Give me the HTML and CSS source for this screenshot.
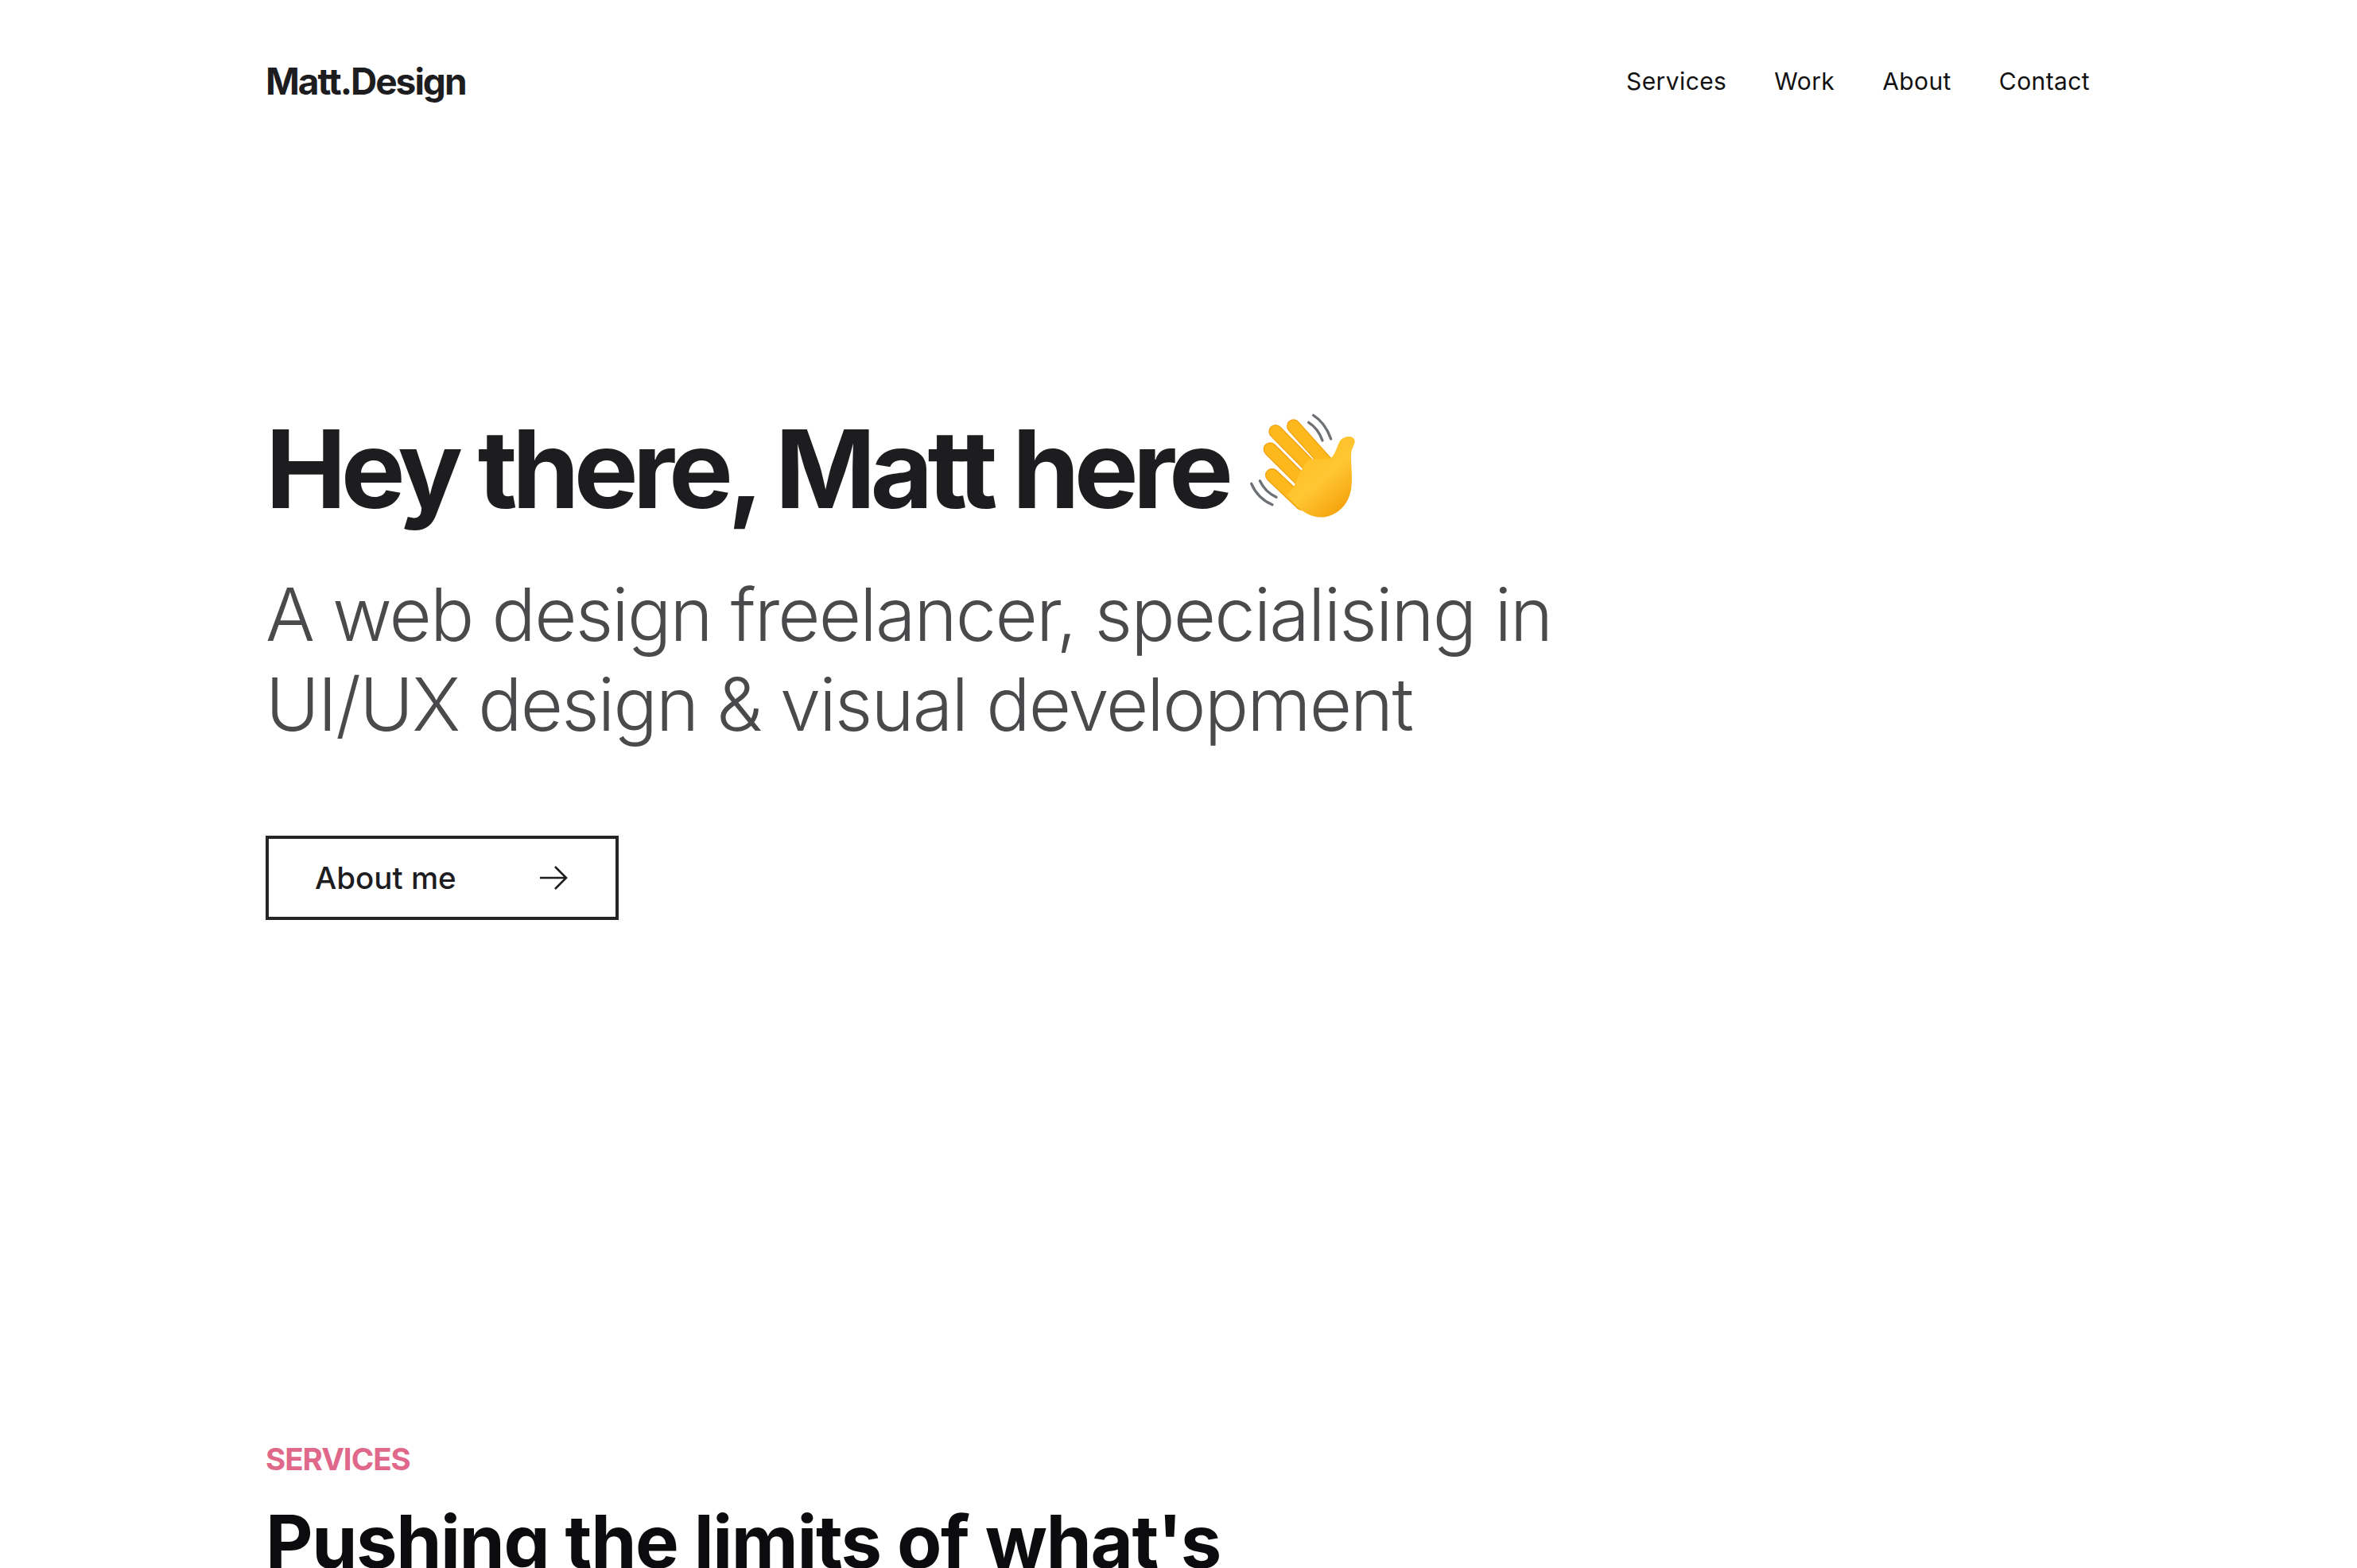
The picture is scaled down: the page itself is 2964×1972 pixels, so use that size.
FILE: index.html
```html
<!DOCTYPE html>
<html lang="en">
<head>
    <meta charset="UTF-8">
    <title>Matt.Design</title>
    <link rel="stylesheet" href="styles.css">
</head>
<body>
    <div class="wrapper">
        <header class="top">
            <a href="#" class="logo">Matt.Design</a>
            <nav class="menu">
                <a href="#">Services</a>
                <a href="#">Work</a>
                <a href="#">About</a>
                <a href="#">Contact</a>
            </nav>
        </header>
        <section class="hero">
            <h1 class="hero-title">
                <span>Hey there, Matt here</span>
                <svg class="wave" viewBox="0 0 600 510" aria-hidden="true">
                    <defs>
                        <linearGradient id="skin" x1="0" y1="0" x2="0.7" y2="1">
                            <stop offset="0" stop-color="#fdb91c"/>
                            <stop offset="0.6" stop-color="#ffc733"/>
                            <stop offset="1" stop-color="#f5a20c"/>
                        </linearGradient>
                    </defs>
                    <g fill="none" stroke="#6d7074" stroke-width="10" stroke-linecap="round">
                        <path d="M305 94C328 108 346 132 357 162"/>
                        <path d="M323 67C352 85 375 116 389 156"/>
                        <path d="M121 314C134 342 153 362 183 376"/>
                        <path d="M89 325C104 360 130 388 168 404"/>
                    </g>
                    <g fill="none" stroke="#f2a00e" stroke-width="52" stroke-linecap="round">
                        <path d="M167 293L280 400"/>
                        <path d="M160 195L300 335"/>
                        <path d="M180 128L325 275"/>
                        <path d="M248 108L380 255"/>
                    </g>
                    <g fill="none" stroke="#fdb91c" stroke-width="45" stroke-linecap="round">
                        <path d="M167 293L280 400"/>
                        <path d="M160 195L300 335"/>
                        <path d="M180 128L325 275"/>
                        <path d="M248 108L380 255"/>
                    </g>
                    <path fill="url(#skin)" d="M252 330L274 280L305 232L385 232C405 215 410 190 420 170C430 148 462 140 476 155C486 168 470 185 466 205C462 240 472 290 466 340C458 400 420 440 370 450C325 458 285 435 255 405L225 370Z"/>
                </svg>
            </h1>
            <p class="hero-desc">A web design freelancer, specialising in<br>UI/UX design &amp; visual development</p>
            <a href="#" class="btn">
                <span>About me</span>
                <svg class="btn-arrow" viewBox="0 0 36 30" aria-hidden="true">
                    <path d="M1 15H34M20 1L34 15L20 29" fill="none" stroke="#1d1d1f" stroke-width="2.6"/>
                </svg>
            </a>
        </section>
        <section class="services">
            <div class="label">SERVICES</div>
            <h2 class="services-title">Pushing the limits of what's</h2>
        </section>
    </div>
</body>
</html>
```

FILE: styles.css
```css
html, body{
    margin: 0;
    height: 1972px;
    overflow: hidden;
    background-color: #ffffff;
}
body{
    padding-right: 2px;
    font-family: "Inter", "Liberation Sans", sans-serif;
    color: #1d1d1f;
}
a{
    text-decoration: none;
    color: inherit;
}
.wrapper{
    width: 2294px;
    margin: 0 auto;
}
.top{
    display: flex;
    justify-content: space-between;
    align-items: center;
    height: 204px;
}
.logo{
    font-size: 46px;
    font-weight: 700;
    letter-spacing: -2px;
}
.menu{
    display: flex;
    gap: 60px;
    font-size: 30px;
    letter-spacing: 0.4px;
    color: #111111;
}
.hero{
    padding-top: 296px;
}
.hero-title{
    display: flex;
    align-items: flex-start;
    margin: 0;
    height: 180px;
    font-size: 136px;
    font-weight: 700;
    letter-spacing: -6.9px;
    line-height: 180px;
}
.wave{
    width: 200px;
    height: 170px;
}
.hero-desc{
    margin: 36px 0 0;
    font-size: 92px;
    font-weight: 300;
    line-height: 113px;
    letter-spacing: -1.85px;
    color: #4a4a4c;
}
.btn{
    display: flex;
    justify-content: space-between;
    align-items: center;
    box-sizing: border-box;
    width: 444px;
    height: 106px;
    margin-top: 109px;
    padding: 0 60px 0 58px;
    border: 4px solid #252527;
    font-size: 38.5px;
    font-weight: 500;
}
.btn-arrow{
    width: 36px;
    height: 30px;
}
.services{
    padding-top: 654px;
}
.label{
    font-size: 38.5px;
    font-weight: 700;
    line-height: 48px;
    letter-spacing: -1px;
    color: #e0688a;
}
.services-title{
    margin: 22px 0 0;
    font-size: 92px;
    font-weight: 700;
    line-height: 116px;
    letter-spacing: -1.4px;
    color: #0c0c0e;
}
```
